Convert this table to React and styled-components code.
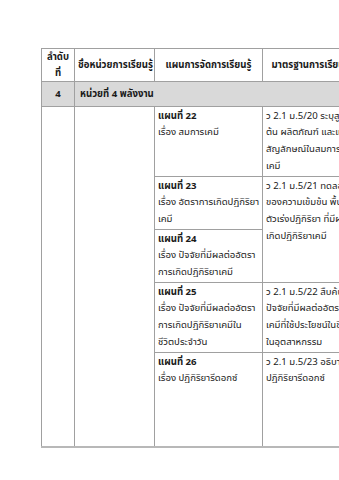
import React from 'react';
import styled, { createGlobalStyle } from 'styled-components';

const GlobalStyle = createGlobalStyle`
  html, body {
    margin: 0;
    padding: 0;
    background: #ffffff;
    overflow: hidden;
  }
  body {
    font-family: Tahoma, "Noto Sans Thai", "Noto Sans", sans-serif;
    color: #1a1a1a;
  }
`;

const Page = styled.div`
  width: 339px;
  height: 480px;
  overflow: hidden;
  padding: 48px 0 0 41px;
  box-sizing: border-box;
`;

const Table = styled.table`
  border-collapse: collapse;
  table-layout: fixed;
  width: 464px;
  font-size: 9.6px;
  line-height: 16.7px;
  border-bottom: 2px solid #b8b8b8;
`;

const Th = styled.th`
  border: 1px solid #a0a0a0;
  border-left-color: ${(p) => (p.$dark ? '#555555' : '#a0a0a0')};
  padding: 0 3px;
  font-weight: bold;
  line-height: 16px;
  text-align: center;
  vertical-align: middle;
  height: 32px;
  white-space: nowrap;
`;

const GroupRow = styled.tr`
  background: #d9d9d9;
`;

const GroupCell = styled.td`
  border: 1px solid #a0a0a0;
  padding: 4px 5px 3px;
  font-weight: bold;
  text-align: ${(p) => (p.$center ? 'center' : 'left')};
`;

const Td = styled.td`
  border: 1px solid #a0a0a0;
  border-left-color: ${(p) => (p.$dark ? '#555555' : '#a0a0a0')};
  padding: 1px 3px;
  vertical-align: top;
  height: ${(p) => (p.$h ? `${p.$h}px` : 'auto')};
  white-space: nowrap;
`;

const PlanNo = styled.div`
  font-weight: bold;
`;

const plans = [
  {
    no: 'แผนที่ 22',
    topic: ['เรื่อง สมการเคมี'],
    std: [
      'ว 2.1 ม.5/20 ระบุสูตรเคมีของสารตั้ง',
      'ต้น ผลิตภัณฑ์ และแปลความหมายของ',
      'สัญลักษณ์ในสมการเคมีของปฏิกิริยา',
      'เคมี',
    ],
    span: 1,
  },
  {
    no: 'แผนที่ 23',
    topic: ['เรื่อง อัตราการเกิดปฏิกิริยา', 'เคมี'],
    std: [
      'ว 2.1 ม.5/21 ทดลองและอธิบายผล',
      'ของความเข้มข้น พื้นที่ผิว อุณหภูมิ และ',
      'ตัวเร่งปฏิกิริยา ที่มีผลต่ออัตราการ',
      'เกิดปฏิกิริยาเคมี',
    ],
    span: 2,
  },
  {
    no: 'แผนที่ 24',
    topic: ['เรื่อง ปัจจัยที่มีผลต่ออัตรา', 'การเกิดปฏิกิริยาเคมี'],
    std: null,
  },
  {
    no: 'แผนที่ 25',
    topic: ['เรื่อง ปัจจัยที่มีผลต่ออัตรา', 'การเกิดปฏิกิริยาเคมีใน', 'ชีวิตประจำวัน'],
    std: [
      'ว 2.1 ม.5/22 สืบค้นข้อมูลและอธิบาย',
      'ปัจจัยที่มีผลต่ออัตราการเกิดปฏิกิริยา',
      'เคมีที่ใช้ประโยชน์ในชีวิตประจำวันหรือ',
      'ในอุตสาหกรรม',
    ],
    span: 1,
  },
  {
    no: 'แผนที่ 26',
    topic: ['เรื่อง ปฏิกิริยารีดอกซ์'],
    std: ['ว 2.1 ม.5/23 อธิบายและเขียนสมการ', 'ปฏิกิริยารีดอกซ์'],
    span: 1,
    h: 91,
  },
];

const Lines = ({ lines }) =>
  lines.map((l, i) => (
    <React.Fragment key={i}>
      {i > 0 && <br />}
      {l}
    </React.Fragment>
  ));

export default function App() {
  return (
    <Page>
      <GlobalStyle />
      <Table>
        <colgroup>
          <col style={{ width: 33 }} />
          <col style={{ width: 80 }} />
          <col style={{ width: 108 }} />
          <col style={{ width: 128 }} />
          <col style={{ width: 115 }} />
        </colgroup>
        <thead>
          <tr>
            <Th>
              ลำดับ
              <br />
              ที่
            </Th>
            <Th>ชื่อหน่วยการเรียนรู้</Th>
            <Th $dark>แผนการจัดการเรียนรู้</Th>
            <Th>มาตรฐานการเรียนรู้/ตัวชี้วัด</Th>
            <Th>สาระการเรียนรู้</Th>
          </tr>
        </thead>
        <tbody>
          <GroupRow>
            <GroupCell $center>4</GroupCell>
            <GroupCell colSpan={4}>หน่วยที่ 4 พลังงาน</GroupCell>
          </GroupRow>
          {plans.map((p, i) => (
            <tr key={p.no}>
              {i === 0 && (
                <>
                  <Td rowSpan={plans.length} />
                  <Td rowSpan={plans.length} />
                </>
              )}
              <Td $dark $h={p.h}>
                <PlanNo>{p.no}</PlanNo>
                <Lines lines={p.topic} />
              </Td>
              {p.std && (
                <Td rowSpan={p.span}>
                  <Lines lines={p.std} />
                </Td>
              )}
              {i === 0 && <Td rowSpan={plans.length} />}
            </tr>
          ))}
        </tbody>
      </Table>
    </Page>
  );
}
